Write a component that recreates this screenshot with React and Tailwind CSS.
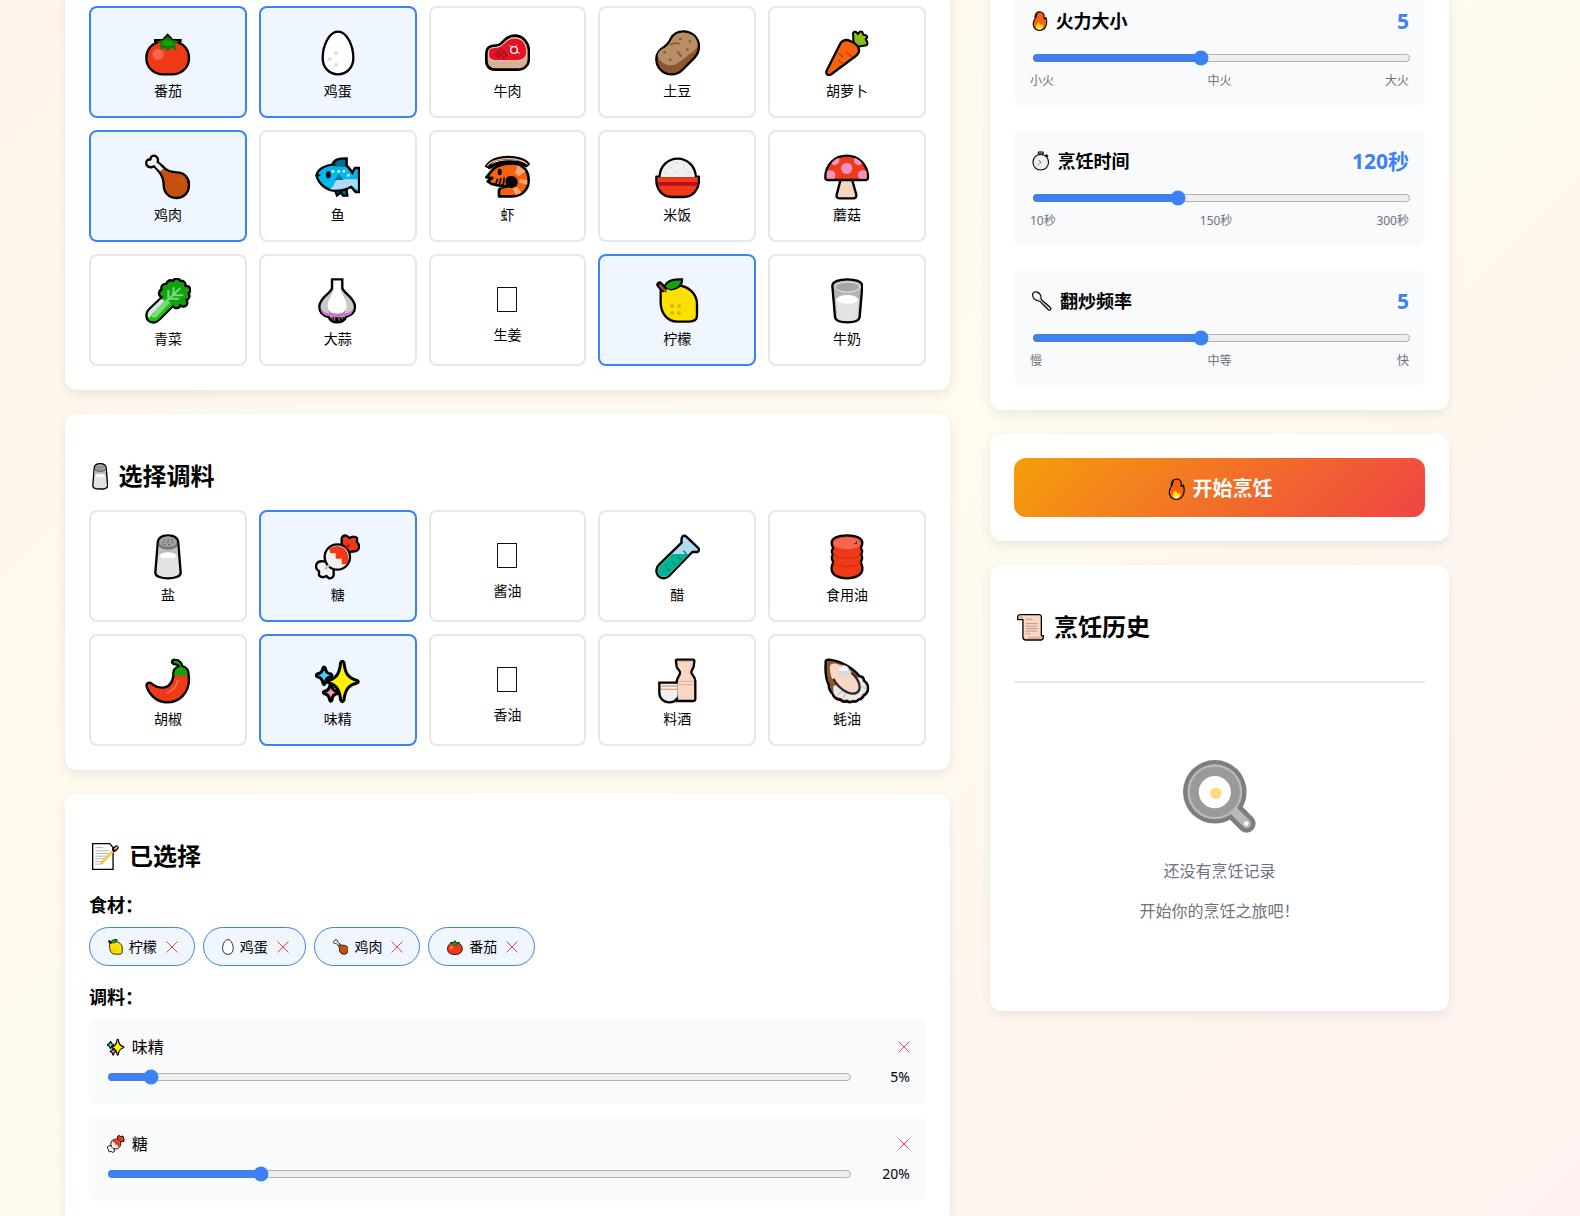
import React, { useState } from 'react';
import clsx from 'clsx';

// Every drawing is cropped tight: w and h are the viewBox, art is what goes in it
const ART = {
  tomato: {
    w: 136, h: 138,
    art: (
      <>
        <path d="M68 31C104 31 132 50 132 84C132 116 106 133 82 133H54C30 133 4 116 4 84C4 50 32 31 68 31Z" fill="#f03a17" stroke="#000" strokeWidth="7" />
        <path d="M27 27H52L68 10L84 27H110V36H27Z" fill="#000" />
        <path d="M34 35L54 30L68 18L82 30L104 34L89 42L96 62L80 53L68 63L56 53L42 62L48 42Z" fill="#107c10" />
        <ellipse cx="68" cy="39" rx="17" ry="8" fill="#16a10c" />
        <circle cx="39" cy="73" r="17" fill="#f5664c" />
      </>
    ),
  },
  egg: {
    w: 102, h: 138,
    art: (
      <>
        <path d="M51 5C79 5 97 50 97 84C97 114 76 133 51 133S5 114 5 84C5 50 23 5 51 5Z" fill="#fff" stroke="#000" strokeWidth="7" />
        <g fill="#dedede">
          <circle cx="45" cy="70" r="6" />
          <circle cx="27" cy="88" r="6" />
          <circle cx="45" cy="104" r="6" />
        </g>
      </>
    ),
  },
  steak: {
    w: 136, h: 138,
    art: (
      <>
        <path d="M4 70C4 52 16 47 32 47C56 47 54 18 88 17C116 17 132 40 132 66V84C132 108 116 119 96 119H34C12 119 4 108 4 92Z" fill="#d8b094" stroke="#000" strokeWidth="8" />
        <path d="M11 68C11 56 18 53 34 52C58 50 60 25 88 24C112 24 125 42 125 64C125 84 112 92 92 92H34C18 92 11 84 11 76Z" fill="#e81224" stroke="#f7d0bf" strokeWidth="3" />
        <path d="M32 74L48 58M38 84L60 62M52 86L68 70M36 62L58 84M48 56L70 80M30 72L42 84" stroke="#a80f1f" strokeWidth="4" />
        <circle cx="87" cy="60" r="10" fill="#c50f1f" stroke="#fff" strokeWidth="4" />
        <path d="M79 51L75 46M96 66L104 70M92 50L96 45" stroke="#fff" strokeWidth="3" />
      </>
    ),
  },
  potato: {
    w: 136, h: 138,
    art: (
      <>
        <path d="M85 4C112 4 132 24 132 50C132 74 116 86 104 98L82 120C70 132 58 133 50 133C22 133 4 112 4 86C4 68 14 58 28 50C40 43 42 36 48 25C56 10 70 4 85 4Z" fill="#8e562e" stroke="#000" strokeWidth="7" />
        <path d="M8 78C16 102 46 114 68 100C84 90 94 78 110 68C122 60 128 52 128 42C124 18 108 8 85 8C70 8 58 14 51 27C45 38 42 46 30 53C16 60 8 66 8 78Z" fill="#b78e65" />
        <path d="M46 44Q60 36 74 42M66 64L80 80" fill="none" stroke="#8e562e" strokeWidth="5" />
        <g fill="#8e562e">
          <circle cx="76" cy="27" r="4" />
          <circle cx="105" cy="34" r="4" />
          <circle cx="97" cy="59" r="4" />
          <circle cx="29" cy="67" r="4" />
          <circle cx="46" cy="89" r="4" />
        </g>
      </>
    ),
  },
  carrot: {
    w: 132, h: 138,
    art: (
      <>
        <path d="M86 44L84 10Q86 3 93 6L99 12Q105 1 112 6L115 14Q126 14 127 22L122 28Q132 40 124 46L98 50Z" fill="#86bf17" stroke="#000" strokeWidth="6" strokeLinejoin="round" />
        <path d="M8 134C3 132 3 126 6 120L44 44C50 30 62 27 76 33C92 40 104 50 102 64C100 74 92 80 80 87L20 132C14 136 11 136 8 134Z" fill="#f7630c" stroke="#000" strokeWidth="7" />
        <path d="M64 66L82 82M40 70L54 82M40 90L54 102" stroke="#c44b12" strokeWidth="6" />
      </>
    ),
  },
  chicken: {
    w: 136, h: 138,
    art: (
      <>
        <path d="M54 38L38 24C42 12 32 2 22 6C16 8 18 12 16 17C8 15 2 22 4 30C6 40 20 42 28 37L42 52Z" fill="#f0f0f0" stroke="#000" strokeWidth="7" strokeLinejoin="round" />
        <path d="M40 50L52 36C66 52 78 55 96 55C118 55 132 72 132 92C132 116 116 132 94 132C70 132 56 114 56 92C56 72 50 62 40 50Z" fill="#c7500f" stroke="#000" strokeWidth="7" strokeLinejoin="round" />
        <path d="M34 32L50 48" stroke="#f0f0f0" strokeWidth="12" />
        <g fill="#e58a5c">
          <circle cx="103" cy="75" r="2" />
          <circle cx="112" cy="73" r="2" />
          <circle cx="112" cy="82" r="2" />
        </g>
      </>
    ),
  },
  fish: {
    w: 136, h: 138,
    art: (
      <>
        <path d="M50 36C56 16 70 13 95 13V42Z" fill="#006c8f" stroke="#000" strokeWidth="7" />
        <path d="M58 104L66 124L78 115L84 125H97L94 104Z" fill="#006c8f" stroke="#000" strokeWidth="7" />
        <path d="M4 64C10 42 34 32 60 32H90C102 38 108 50 112 56L120 42H132V114H122L108 98C96 106 84 110 66 110C34 112 10 88 4 64Z" fill="#00b8f0" stroke="#000" strokeWidth="7" />
        <path d="M44 106C60 98 56 80 70 76H128V108L110 94C90 106 70 108 44 106Z" fill="#b3d9f2" />
        <path d="M58 78L72 60L86 78Z" fill="#00739a" />
        <path d="M58 38C66 18 76 18 90 18V38Z" fill="#006c8f" />
        <path d="M4 58L18 64L6 70Z" fill="#000" />
        <ellipse cx="40" cy="62" rx="7" ry="11" fill="#000" />
        <g fill="#fff">
          <circle cx="54" cy="52" r="4" />
          <circle cx="71" cy="52" r="4" />
          <circle cx="87" cy="52" r="4" />
          <circle cx="100" cy="64" r="4" />
        </g>
      </>
    ),
  },
  shrimp: {
    w: 136, h: 138,
    art: (
      <>
        <path d="M14 58C28 34 56 28 84 28C112 28 131 50 131 78C131 108 110 127 82 127H42V108C46 100 56 98 66 98L40 94L20 90L8 82L22 72L4 70Z" fill="#f7630c" stroke="#000" strokeWidth="8" strokeLinejoin="round" />
        <path d="M98 34L122 52L102 66L90 58ZM127 78V92L104 86V76ZM110 116L92 123L82 100H96Z" fill="#f9a77a" />
        <path d="M64 98C58 76 64 66 78 66C92 66 98 76 98 86C98 96 88 102 76 102Z" fill="#000" />
        <path d="M38 74L30 96M48 72L42 96M58 70L54 96" stroke="#000" strokeWidth="5" />
        <ellipse cx="44" cy="54" rx="6" ry="10" fill="#000" />
        <path d="M6 36C20 14 58 8 88 12C108 15 122 20 129 30M14 40C40 22 92 18 124 34" fill="none" stroke="#000" strokeWidth="11" strokeLinecap="round" />
        <path d="M8 34C22 16 58 12 88 15C106 18 118 22 126 30" fill="none" stroke="#f7b896" strokeWidth="4" strokeLinecap="round" />
      </>
    ),
  },
  rice: {
    w: 136, h: 138,
    art: (
      <>
        <circle cx="68" cy="68" r="54" fill="#f0f0f0" stroke="#000" strokeWidth="7" />
        <path d="M4 68V78C4 106 22 129 50 129H86C114 129 132 106 132 78V68Z" fill="#f03a17" stroke="#000" strokeWidth="7" strokeLinejoin="round" />
        <path d="M17 62H119V70H17Z" fill="#f0f0f0" />
        <path d="M8 70H128V76H8Z" fill="#f03a17" />
        <path d="M8 84H128L126 95H10Z" fill="#b80f1c" />
        <path d="M62 24L70 30M44 38L52 44M84 36L90 44M62 56L70 50M30 54L38 60M98 52L106 58" stroke="#cfcfcf" strokeWidth="3" />
      </>
    ),
  },
  mushroom: {
    w: 136, h: 138,
    art: (
      <>
        <path d="M50 76L38 122Q36 133 46 133H88Q98 133 97 122L84 76Z" fill="#f7d7c4" stroke="#000" strokeWidth="7" />
        <path d="M4 70C4 30 34 5 68 5S132 30 132 70Q132 78 126 78H10Q4 78 4 70Z" fill="#f03a17" stroke="#000" strokeWidth="7" />
        <g fill="#f593c0">
          <circle cx="68" cy="43" r="17" />
          <path d="M8 72V56C8 46 34 46 34 62Q34 70 30 74H10Z" />
          <path d="M128 72V56C128 46 102 46 102 62Q102 70 106 74H126Z" />
          <path d="M22 28Q32 14 46 12Q48 32 32 34Q24 34 22 28Z" />
          <path d="M114 28Q104 14 90 12Q88 32 104 34Q112 34 114 28Z" />
        </g>
      </>
    ),
  },
  greens: {
    w: 136, h: 138,
    art: (
      <>
        <path d="M50 58A13 13 0 0 1 50 34A12 12 0 0 1 64 18A13 13 0 0 1 84 9A12 12 0 0 1 106 9A12 12 0 0 1 121 24A12 12 0 0 1 130 46A12 12 0 0 1 124 66A12 12 0 0 1 106 82A12 12 0 0 1 84 84L44 124C32 137 18 135 10 128C2 120 2 104 12 94Z" fill="#13a10e" stroke="#000" strokeWidth="7" strokeLinejoin="round" />
        <path d="M50 62L16 94C6 104 6 118 12 125C20 132 32 132 42 122L82 82L72 64Z" fill="#16c60c" />
        <path d="M50 62L15 96C6 106 8 114 12 120L58 70Z" fill="#e0e0e0" />
        <path d="M20 108L60 68L76 72L36 116C26 122 16 118 20 108Z" fill="#7bdb78" />
        <path d="M58 76L104 32M70 64V38M84 52L86 30M74 62H100M86 52H112" stroke="#7bdb78" strokeWidth="6" strokeLinecap="round" />
      </>
    ),
  },
  garlic: {
    w: 116, h: 138,
    art: (
      <>
        <path d="M42 4H73V30C76 46 111 58 111 86C111 106 94 114 84 117C80 128 70 133 57 133C44 133 36 128 32 117C20 114 4 106 4 86C4 58 40 46 42 30Z" fill="#c8c8c8" stroke="#000" strokeWidth="7" />
        <path d="M8 90C20 112 40 104 57 104C74 104 96 112 107 90C106 108 92 114 80 115H36C20 114 8 106 8 90Z" fill="#c774c9" />
        <path d="M47 8H68V32C70 52 86 62 86 84C86 100 72 107 57 107S29 100 29 84C29 62 45 52 47 32Z" fill="#fff" />
        <path d="M32 96C40 112 74 112 82 96C82 110 76 118 57 118C40 118 32 110 32 96Z" fill="#c774c9" />
        <path d="M34 118H80Q76 131 57 131Q40 131 34 118Z" fill="#000" />
        <path d="M38 118L46 124M50 118V128M62 118L64 128M70 118L74 124" stroke="#d8a58c" strokeWidth="3" />
      </>
    ),
  },
  lemon: {
    w: 128, h: 138,
    art: (
      <>
        <path d="M14 36C22 26 42 20 64 21C96 24 123 46 123 78V112C123 126 114 131 100 131H64C32 131 14 104 14 72Z" fill="#fce100" stroke="#000" strokeWidth="7" />
        <path d="M26 26C34 8 48 4 78 4C78 22 66 32 44 34Z" fill="#13a10e" stroke="#000" strokeWidth="7" />
        <path d="M11 20L22 32" stroke="#000" strokeWidth="20" strokeLinecap="round" />
        <path d="M28 26C36 12 48 8 74 8C73 22 62 31 42 34Z" fill="#13a10e" />
        <path d="M12 22L29 40" stroke="#8e562e" strokeWidth="7" strokeLinecap="round" />
        <g fill="#d9b400">
          <circle cx="48" cy="84" r="6" />
          <circle cx="69" cy="84" r="6" />
          <circle cx="48" cy="105" r="6" />
          <circle cx="69" cy="105" r="6" />
        </g>
      </>
    ),
  },
  milk: {
    w: 98, h: 138,
    art: (
      <>
        <path d="M4 24C4 10 26 4 49 4S94 10 94 24L86 118C84 130 66 133 49 133S14 130 12 118Z" fill="#b4b4b4" stroke="#000" strokeWidth="7" />
        <path d="M14 62L18 118C20 126 34 129 49 129S78 126 80 118L84 62Z" fill="#e3e3e3" />
        <ellipse cx="49" cy="27" rx="37" ry="15" fill="#a6a6a6" stroke="#e8e8e8" strokeWidth="3" />
        <ellipse cx="49" cy="64" rx="32" ry="13" fill="#fff" />
      </>
    ),
  },
  salt: {
    w: 84, h: 138,
    art: (
      <>
        <path d="M11 30C11 10 26 4 42 4S73 10 73 30L80 116C80 128 60 133 42 133S4 128 4 116Z" fill="#e3e3e3" stroke="#000" strokeWidth="7" />
        <path d="M14 40H70L72 64H12Z" fill="#bdbdbd" />
        <path d="M14 30C14 12 28 8 42 8S70 12 70 30V38Q42 56 14 38Z" fill="#767676" />
        <path d="M16 26C18 12 28 8 42 8S66 12 68 26Q66 38 42 38T16 26Z" fill="#a3a3a3" />
        <path d="M28 18H34M40 18H46M52 18H58M24 25H30M38 25H44M52 25H58M28 32H34M42 32H48" stroke="#5f5f5f" strokeWidth="3" />
        <ellipse cx="42" cy="64" rx="25" ry="9" fill="#fff" />
      </>
    ),
  },
  candy: {
    w: 136, h: 138,
    art: (
      <>
        <path d="M80 42L80 14Q82 2 94 5L104 12Q116 4 126 12L126 24Q136 34 130 46Q124 54 112 52L92 58Z" fill="#f03a17" stroke="#000" strokeWidth="7" strokeLinejoin="round" />
        <path d="M56 98L56 124Q52 134 42 133L34 126Q20 134 12 124L12 112Q0 104 4 92Q8 80 24 82L44 82Z" fill="#f0f0f0" stroke="#000" strokeWidth="7" strokeLinejoin="round" />
        <circle cx="67" cy="69" r="38" fill="#f0f0f0" stroke="#000" strokeWidth="7" />
        <path d="M43 44A35 35 0 0 1 94 91H80V74H62V58H46Z" fill="#f03a17" />
        <path d="M30 106L44 92" stroke="#c8c8c8" strokeWidth="7" />
        <path d="M90 44L104 32" stroke="#b80f1c" strokeWidth="7" />
      </>
    ),
  },
  tube: {
    w: 136, h: 138,
    art: (
      <>
        <path d="M80 26L12 92C2 102 2 118 10 126C20 136 34 134 42 126L112 54L128 54Q136 46 128 40L94 8Q88 2 82 8Q78 14 80 26Z" fill="#b3d9f2" stroke="#000" strokeWidth="7" strokeLinejoin="round" />
        <path d="M52 60H102L39 123C32 130 20 130 13 123C6 116 7 104 15 95Z" fill="#00b294" />
        <path d="M85 50L94 59M68 68L78 78M52 84L62 94M36 102L44 110" stroke="#007a66" strokeWidth="4" />
      </>
    ),
  },
  barrel: {
    w: 102, h: 138,
    art: (
      <>
        <path d="M5 26C5 12 24 4 51 4S97 12 97 26C97 36 92 38 93 44C97 48 98 56 93 62C97 66 98 76 93 82C92 90 98 92 97 106C97 122 78 133 51 133S5 122 5 106C4 92 10 90 9 82C4 76 5 66 9 62C4 56 5 48 9 44C10 38 5 36 5 26Z" fill="#f03a17" stroke="#000" strokeWidth="7" />
        <ellipse cx="51" cy="28" rx="41" ry="18" fill="#f5684d" />
        <path d="M10 62Q24 73 51 73T92 62M10 86Q24 98 51 98T92 86" fill="none" stroke="#d13400" strokeWidth="4" />
        <circle cx="77" cy="26" r="5" fill="#5a2a20" />
        <circle cx="75" cy="24" r="2" fill="#fff" />
      </>
    ),
  },
  chili: {
    w: 136, h: 138,
    art: (
      <>
        <path d="M5 86C2 74 14 70 24 80C48 96 80 92 85 54C84 30 132 16 132 64C132 104 104 133 66 133C34 133 12 108 5 86Z" fill="#f03a17" stroke="#000" strokeWidth="7" />
        <path d="M85 50C84 34 92 28 102 25C96 17 92 20 86 18C78 14 80 4 90 5C104 6 111 16 112 24C124 28 131 38 131 50" fill="#13a10e" stroke="#000" strokeWidth="7" strokeLinejoin="round" />
        <path d="M88 52C87 36 94 30 104 28H112C122 32 128 40 128 52L121 46L112 56L104 46L96 56Z" fill="#13a10e" />
        <path d="M68 104Q92 94 98 68" fill="none" stroke="#f5684d" strokeWidth="6" strokeLinecap="round" />
      </>
    ),
  },
  sparkles: {
    w: 136, h: 138,
    art: (
      <>
        <g stroke="#000" strokeWidth="9" strokeLinejoin="round">
          <path d="M24 30Q27 24 31 30Q32 46 48 48Q54 52 48 56Q32 58 31 76Q27 84 24 76Q22 58 6 56Q2 52 6 48Q22 46 24 30Z" fill="#3fd4ff" />
          <path d="M44 84Q47 78 51 84Q52 98 66 100Q72 103 66 107Q52 109 51 126Q47 134 44 126Q42 109 28 107Q22 103 28 100Q42 98 44 84Z" fill="#f593c0" />
          <path d="M77 14Q82 5 87 14C90 44 98 60 126 67Q134 71 126 75C98 82 90 98 87 126Q82 136 77 126C74 98 66 82 42 75Q36 71 42 67C66 60 74 44 77 14Z" fill="#fff100" />
        </g>
      </>
    ),
  },
  sake: {
    w: 116, h: 138,
    art: (
      <>
        <path d="M54 10Q52 5 58 5H104Q110 5 109 10L107 26C104 34 100 36 100 44C104 54 112 56 112 70V122Q112 129 104 129H56V70C58 56 66 54 66 44C66 36 58 34 56 26Z" fill="#f7d7c4" stroke="#000" strokeWidth="7" />
        <path d="M60 10H106M60 70H108M60 80H108" stroke="#d8b094" strokeWidth="3" />
        <path d="M4 74H59V108C58 124 48 133 34 133C16 133 4 120 4 104Z" fill="#f0f0f0" />
        <path d="M59 74H4V104C4 120 16 133 34 133C46 133 54 128 58 120" fill="none" stroke="#000" strokeWidth="7" />
        <path d="M9 84H58M9 94H58" stroke="#d8a57c" strokeWidth="4" />
      </>
    ),
  },
  oyster: {
    w: 136, h: 138,
    art: (
      <>
        <path d="M5 12Q4 5 14 5C50 8 88 30 106 54Q120 56 120 68Q134 78 132 92Q132 106 120 112Q112 126 104 124Q98 134 88 130Q76 136 70 130Q56 134 50 126Q30 124 26 108Q14 96 14 80Q2 60 5 12Z" fill="#8e562e" stroke="#000" strokeWidth="7" strokeLinejoin="round" />
        <path d="M28 84L104 58Q116 60 116 70Q129 80 128 92Q126 104 116 108Q110 120 104 120Q96 128 88 125Q76 130 70 124Q58 128 52 120Q34 118 28 104Z" fill="#e8e8e8" />
        <path d="M18 24C22 12 40 16 62 28C90 44 108 64 108 88C106 106 90 112 70 104C40 92 14 60 18 24Z" fill="#f7d7c4" />
        <path d="M82 44C98 58 107 72 107 88C106 106 90 111 70 103C52 94 36 78 28 62" fill="none" stroke="#2b2b2b" strokeWidth="7" />
        <circle cx="59" cy="38" r="17" fill="#dadada" />
        <path d="M46 32Q58 20 72 32V38H46Z" fill="#fff" />
        <path d="M40 112L54 100M58 118L64 106M112 84L124 92" stroke="#c4c4c4" strokeWidth="4" />
      </>
    ),
  },
  missing: {
    w: 60, h: 114,
    art: <rect x="1.5" y="16.5" width="57" height="72" fill="#fff" stroke="#111" strokeWidth="3" />,
  },
  memo: {
    w: 82, h: 82,
    art: (
      <>
        <path d="M2 2H54L64 14V80H2Z" fill="#fff" stroke="#000" strokeWidth="4" />
        <path d="M10 14H34M10 24H54M10 32H54M10 40H50M10 48H42M10 56H36M10 64H26" stroke="#b5b5b5" strokeWidth="3" />
        <path d="M28 64L70 18" stroke="#000" strokeWidth="3" />
        <path d="M28 62L68 20" stroke="#fcc434" strokeWidth="7" />
        <path d="M22 67L30 64L26 60Z" fill="#e8c39e" />
        <path d="M68 20L74 14" stroke="#000" strokeWidth="14" strokeLinecap="round" />
        <path d="M70 18L75 13" stroke="#f0a0a0" strokeWidth="6" strokeLinecap="round" />
      </>
    ),
  },
  scroll: {
    w: 82, h: 82,
    art: (
      <>
        <path d="M2 17V8Q3 2 10 2H68Q74 3 74 10V66H80V70Q80 79 72 79H26Q18 78 18 70V17Z" fill="#f7d7c4" stroke="#000" strokeWidth="4" strokeLinejoin="round" />
        <path d="M5 14Q6 6 14 6Q20 8 18 14Z" fill="#d8b094" />
        <path d="M34 69H77Q76 76 70 76H30Q34 74 34 69Z" fill="#d8b094" />
        <path d="M27 16H46M27 29H64M27 37H60M27 44H64M27 52H62M27 60H40" stroke="#c79a7c" strokeWidth="3" />
      </>
    ),
  },
  fire: {
    w: 50, h: 64,
    art: (
      <>
        <path d="M10 24C8 8 16 2 28 3C38 5 40 14 38 24C42 26 44 22 44 20C50 32 48 62 25 62C4 62 -2 40 10 24Z" fill="#f7630c" stroke="#000" strokeWidth="3.5" strokeLinejoin="round" />
        <path d="M10 22C12 14 14 8 20 6C14 12 16 18 14 22Z" fill="#000" />
        <path d="M13 52C12 44 17 42 20 36C24 40 27 42 29 46C32 45 32 43 33 41C38 48 37 59 25 60C18 60 14 57 13 52Z" fill="#fce100" />
        <path d="M19 57L22 51L25 54L29 50L30 57Q25 61 19 57Z" fill="#fff" />
      </>
    ),
  },
  stopwatch: {
    w: 56, h: 64,
    art: (
      <>
        <path d="M20 3H36V10H20Z" fill="#9a9a9a" stroke="#000" strokeWidth="3" />
        <path d="M44 12L51 18" stroke="#000" strokeWidth="6" />
        <circle cx="28" cy="36" r="25" fill="#f2f2f2" stroke="#000" strokeWidth="3.5" />
        <path d="M28 16V20M28 52V56M8 36H12M44 36H48M14 22L17 25M42 22L39 25M14 50L17 47M42 50L39 47" stroke="#c4c4c4" strokeWidth="2" />
        <path d="M22 30L29 37" stroke="#333" strokeWidth="3" />
        <path d="M29 37L18 46" stroke="#e81224" strokeWidth="2" />
      </>
    ),
  },
  spoon: {
    w: 64, h: 64,
    art: (
      <>
        <path d="M4 6C10 -1 24 4 28 14C30 20 27 24 30 28L58 52C64 58 58 64 52 60L26 34C22 30 18 32 12 29C3 24 -1 12 4 6Z" fill="#e0e0e0" stroke="#000" strokeWidth="3.5" />
        <path d="M8 10C13 6 22 10 24 17C25 24 22 27 16 25C8 22 5 15 8 10Z" fill="#fff" />
        <path d="M32 34L52 54" stroke="#8a8a8a" strokeWidth="2" />
      </>
    ),
  },
  pan: {
    w: 218, h: 218,
    art: (
      <>
        <path d="M150 150L190 190" stroke="#000" strokeWidth="54" strokeLinecap="round" />
        <circle cx="95" cy="95" r="95" fill="#000" />
        <path d="M145 145L190 190" stroke="#767676" strokeWidth="26" strokeLinecap="round" />
        <circle cx="95" cy="95" r="82" fill="#767676" />
        <circle cx="95" cy="95" r="75" fill="#383838" />
        <circle cx="95" cy="96" r="48" fill="#fff" />
        <circle cx="98" cy="99" r="17" fill="#ffb900" />
        <circle cx="189" cy="190" r="7" fill="#fff" />
      </>
    ),
  },
};

const INGREDIENTS = [
  { name: '番茄', icon: 'tomato' },
  { name: '鸡蛋', icon: 'egg' },
  { name: '牛肉', icon: 'steak' },
  { name: '土豆', icon: 'potato' },
  { name: '胡萝卜', icon: 'carrot' },
  { name: '鸡肉', icon: 'chicken' },
  { name: '鱼', icon: 'fish' },
  { name: '虾', icon: 'shrimp' },
  { name: '米饭', icon: 'rice' },
  { name: '蘑菇', icon: 'mushroom' },
  { name: '青菜', icon: 'greens' },
  { name: '大蒜', icon: 'garlic' },
  { name: '生姜', icon: 'missing' },
  { name: '柠檬', icon: 'lemon' },
  { name: '牛奶', icon: 'milk' },
];

const SEASONINGS = [
  { name: '盐', icon: 'salt' },
  { name: '糖', icon: 'candy' },
  { name: '酱油', icon: 'missing' },
  { name: '醋', icon: 'tube' },
  { name: '食用油', icon: 'barrel' },
  { name: '胡椒', icon: 'chili' },
  { name: '味精', icon: 'sparkles' },
  { name: '香油', icon: 'missing' },
  { name: '料酒', icon: 'sake' },
  { name: '蚝油', icon: 'oyster' },
];

function Icon({ name, className }) {
  const { w, h, art } = ART[name];
  return (
    <svg viewBox={`0 0 ${w} ${h}`} className={clsx('w-auto shrink-0', className)} aria-hidden="true">
      {art}
    </svg>
  );
}

function Card({ children }) {
  return (
    <section className="bg-white rounded-xl p-6 shadow-[0_4px_12px_rgba(0,0,0,0.08)]">
      {children}
    </section>
  );
}

function SectionTitle({ icon, children }) {
  return (
    <h2 className="flex items-center mt-5 mb-4 text-2xl leading-9 font-bold">
      <Icon name={icon} className="h-[27px] ml-[3px] mr-2.5" />
      {children}
    </h2>
  );
}

function PickGrid({ items, isPicked, onPick }) {
  return (
    <div className="grid grid-cols-5 gap-3">
      {items.map(({ name, icon }) => (
        <button
          key={name}
          type="button"
          aria-pressed={isPicked(name)}
          onClick={() => onPick(name)}
          className={clsx(
            'flex flex-col items-center justify-center gap-[5px] min-h-28 pt-[7px] border-2 rounded-lg cursor-pointer',
            isPicked(name) ? 'border-[#3b82f6] bg-[#eff6ff]' : 'border-[#e5e7eb] bg-white'
          )}
        >
          <Icon name={icon} className={icon === 'missing' ? 'h-[38px]' : 'h-[46px]'} />
          <span className="text-sm">{name}</span>
        </button>
      ))}
    </div>
  );
}

function RemoveButton({ label, onClick }) {
  return (
    <button type="button" aria-label={label} onClick={onClick} className="text-[#ef4444] cursor-pointer">
      <svg viewBox="0 0 12 12" className="w-3 h-3" aria-hidden="true">
        <path d="M0.5 0.5L11.5 11.5M11.5 0.5L0.5 11.5" stroke="currentColor" strokeWidth="1" />
      </svg>
    </button>
  );
}

function ControlPanel({ id, icon, title, value, unit = '', min, max, marks, onChange }) {
  return (
    <div className="bg-[#f9fafb] rounded-lg p-4">
      <div className="flex items-center justify-between mb-3 font-bold">
        <label htmlFor={id} className="flex items-center text-lg leading-[30px]">
          <Icon name={icon} className="h-5 ml-0.5 mr-2" />
          {title}
        </label>
        <output htmlFor={id} className="text-[21px] leading-[30px] text-[#3b82f6]">{value}{unit}</output>
      </div>
      <div className="flex">
        <input
          id={id}
          type="range"
          min={min}
          max={max}
          value={value}
          onChange={(e) => onChange(Number(e.target.value))}
          className="grow h-4 my-0.5 ml-0.5 -mr-0.5 accent-[#3b82f6]"
        />
      </div>
      <div className="flex justify-between mt-1 text-xs leading-[18px] text-[#6b7280]">
        {marks.map((mark) => (
          <span key={mark}>{mark}</span>
        ))}
      </div>
    </div>
  );
}

export default function App() {
  const [ingredients, setIngredients] = useState(['柠檬', '鸡蛋', '鸡肉', '番茄']);
  const [seasonings, setSeasonings] = useState([
    { name: '味精', amount: 5 },
    { name: '糖', amount: 20 },
  ]);
  const [heat, setHeat] = useState(5);
  const [time, setTime] = useState(120);
  const [stir, setStir] = useState(5);

  const toggleIngredient = (name) => {
    setIngredients((prev) => (prev.includes(name) ? prev.filter((n) => n !== name) : [...prev, name]));
  };

  const toggleSeasoning = (name) => {
    setSeasonings((prev) =>
      prev.some((s) => s.name === name) ? prev.filter((s) => s.name !== name) : [...prev, { name, amount: 10 }]
    );
  };

  const setAmount = (name, amount) => {
    setSeasonings((prev) => prev.map((s) => (s.name === name ? { ...s, amount } : s)));
  };

  const iconOf = (list, name) => list.find((item) => item.name === name).icon;

  return (
    <div className="min-h-screen overflow-hidden bg-[linear-gradient(135deg,#fff5eb_0%,#fffbef_50%,#fff1ef_100%)] font-['Noto_Sans','Noto_Sans_CJK_SC',sans-serif] text-black">
      <main className="grid grid-cols-[885fr_459fr] items-start gap-10 -mt-[18px] pl-[65px] pr-[131px]">
        <div className="flex flex-col gap-6">
          {/* Ingredients */}
          <Card>
            <PickGrid items={INGREDIENTS} isPicked={(n) => ingredients.includes(n)} onPick={toggleIngredient} />
          </Card>

          {/* Seasonings */}
          <Card>
            <SectionTitle icon="salt">选择调料</SectionTitle>
            <PickGrid
              items={SEASONINGS}
              isPicked={(n) => seasonings.some((s) => s.name === n)}
              onPick={toggleSeasoning}
            />
          </Card>

          {/* Selected */}
          <Card>
            <SectionTitle icon="memo">已选择</SectionTitle>
            <h3 className="mt-[18px] mb-2 text-lg leading-[27px] font-bold">食材：</h3>
            <ul className="flex flex-wrap gap-2">
              {ingredients.map((name) => (
                <li key={name} className="flex items-center px-4 py-2 bg-[#eff6ff] border border-[#3b82f6] rounded-full text-sm leading-[21px]">
                  <Icon name={iconOf(INGREDIENTS, name)} className="h-4 ml-0.5 mr-1.5" />
                  <span className="mr-[9px]">{name}</span>
                  <RemoveButton label={`移除${name}`} onClick={() => toggleIngredient(name)} />
                </li>
              ))}
            </ul>

            <h3 className="mt-[18px] mb-2 text-lg leading-[27px] font-bold">调料：</h3>
            <ul className="flex flex-col gap-3">
              {seasonings.map(({ name, amount }) => (
                <li key={name} className="bg-[#f9fafb] rounded-lg px-4 pt-4 pb-[17px]">
                  <div className="flex items-center justify-between mb-[7px]">
                    <label htmlFor={`amount-${name}`} className="flex items-center text-base">
                      <Icon name={iconOf(SEASONINGS, name)} className="h-[18px] ml-0.5 mr-[7px]" />
                      {name}
                    </label>
                    <RemoveButton label={`移除${name}`} onClick={() => toggleSeasoning(name)} />
                  </div>
                  <div className="flex items-center gap-4 text-sm leading-[21px]">
                    <input
                      id={`amount-${name}`}
                      type="range"
                      min="0"
                      max="100"
                      value={amount}
                      onChange={(e) => setAmount(name, Number(e.target.value))}
                      className="grow h-4 mx-0.5 accent-[#3b82f6]"
                    />
                    <output htmlFor={`amount-${name}`} className="w-10 text-right">{amount}%</output>
                  </div>
                </li>
              ))}
            </ul>
          </Card>
        </div>

        <aside className="flex flex-col gap-6 -mt-4">
          {/* Cooking controls */}
          <Card>
            <div className="flex flex-col gap-6">
              <ControlPanel id="heat" icon="fire" title="火力大小" value={heat} min={1} max={10} marks={['小火', '中火', '大火']} onChange={setHeat} />
              <ControlPanel id="time" icon="stopwatch" title="烹饪时间" value={time} unit="秒" min={10} max={300} marks={['10秒', '150秒', '300秒']} onChange={setTime} />
              <ControlPanel id="stir" icon="spoon" title="翻炒频率" value={stir} min={1} max={10} marks={['慢', '中等', '快']} onChange={setStir} />
            </div>
          </Card>

          <Card>
            <button
              type="button"
              className="flex items-center justify-center w-full pt-[17px] pb-[15px] rounded-xl bg-[linear-gradient(135deg,#f59e0b,#ef4444)] text-xl leading-[27px] font-bold text-white cursor-pointer"
            >
              <Icon name="fire" className="h-[22px] ml-0.5 mr-[7px]" />
              开始烹饪
            </button>
          </Card>

          {/* History */}
          <Card>
            <div className="flow-root border-b-2 border-[#e5e7eb] mb-4 pb-5">
              <SectionTitle icon="scroll">烹饪历史</SectionTitle>
            </div>
            <div className="flex flex-col items-center gap-4 pt-12 pb-16 text-base text-[#6b7280]">
              <div className="flex items-center h-24 pt-0.5">
                <Icon name="pan" className="h-[73px] opacity-50" />
              </div>
              <p>还没有烹饪记录</p>
              <p>开始你的烹饪之旅吧！</p>
            </div>
          </Card>
        </aside>
      </main>
    </div>
  );
}
